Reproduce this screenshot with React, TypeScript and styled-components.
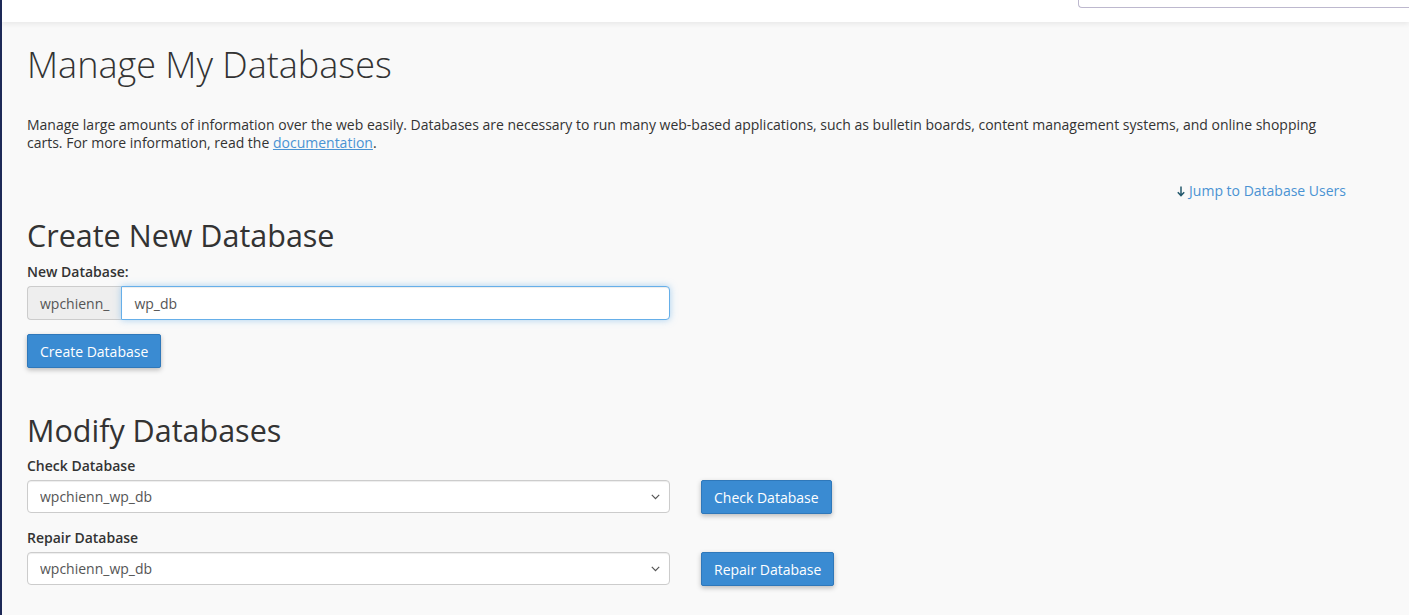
import React from 'react'
import styled, { createGlobalStyle } from 'styled-components'

const GlobalStyle = createGlobalStyle`
	html, body {
		margin: 0;
		padding: 0;
		background: #f9f9f9;
	}
	body {
		font-family: 'Open Sans', 'Liberation Sans', sans-serif;
		font-size: 14px;
		color: #333;
	}
	* {
		box-sizing: border-box;
	}
`

const Page = styled.div`
	min-height: 615px;
	border-left: 2px solid #1d2957;
	overflow: hidden;
`

const TopBar = styled.header`
	height: 22px;
	background: #fff;
	box-shadow: 0 2px 5px rgba(0, 0, 0, 0.07);
	display: flex;
	justify-content: flex-end;
	position: relative;
`

const Search = styled.div`
	width: 331px;
	height: 34px;
	margin-top: -26px;
	border: 1px solid #bdb8ce;
	border-right: none;
	border-radius: 0 0 0 4px;
	background: #fff;
	padding: 0 11px 0 18px;
	line-height: 30px;
	color: #888;
	font-size: 14px;
	white-space: nowrap;
	overflow: hidden;
`

const Paren = styled.span`
	color: #d88a3c;
`

const Main = styled.main`
	padding: 0 63px 0 25px;
`

const Title = styled.h1`
	margin: 22px 0 0;
	font-size: 36px;
	line-height: 42px;
	font-weight: 300;
	color: #333;
`

const Intro = styled.p`
	margin: 30px 0 0;
	line-height: 18px;
	max-width: 1300px;
`

const Link = styled.a`
	color: #4a93d3;
	text-decoration: underline;
`

const JumpRow = styled.div`
	margin-top: 29px;
	display: flex;
	justify-content: flex-end;
	line-height: 20px;
`

const JumpLink = styled.a`
	color: #4a93d3;
	text-decoration: none;
	display: inline-flex;
	align-items: center;
	gap: 4px;
`

const SectionTitle = styled.h2<{ gap: number }>`
	margin: ${p => p.gap}px 0 0;
	font-size: 30.5px;
	line-height: 33px;
	font-weight: 400;
	color: #333;
`

const Label = styled.label<{ gap: number }>`
	display: block;
	margin-top: ${p => p.gap}px;
	margin-bottom: 4px;
	line-height: 20px;
	font-weight: 600;
	color: #333;
`

const InputGroup = styled.div`
	display: flex;
	width: 643px;
	height: 34px;
`

const Addon = styled.span`
	display: flex;
	align-items: center;
	padding: 0 12px;
	background: #eee;
	border: 1px solid #ccc;
	border-right: none;
	border-radius: 4px 0 0 4px;
	color: #555;
`

const TextInput = styled.input`
	flex: 1;
	height: 34px;
	padding: 0 12px;
	border: 1px solid #66afe9;
	border-radius: 0 4px 4px 0;
	font: inherit;
	color: #555;
	outline: none;
	box-shadow: inset 0 1px 1px rgba(0, 0, 0, 0.075), 0 0 7px rgba(102, 175, 233, 0.55);
`

const Button = styled.button<{ gap?: number }>`
	margin-top: ${p => p.gap ?? 0}px;
	height: 34px;
	padding: 0 12px;
	background: #3a8bd2;
	border: 1px solid #2f78ba;
	border-radius: 2px;
	color: #fff;
	font: inherit;
	box-shadow: 0 2px 5px rgba(0, 0, 0, 0.25);
	cursor: pointer;
`

const SelectRow = styled.div`
	display: flex;
	align-items: flex-start;
	gap: 31px;
`

const SelectWrap = styled.div`
	position: relative;
	width: 643px;
`

const Select = styled.select`
	width: 100%;
	height: 33px;
	padding: 0 12px;
	appearance: none;
	background: #fff;
	border: 1px solid #ccc;
	border-radius: 4px;
	font: inherit;
	color: #555;
	box-shadow: inset 0 1px 1px rgba(0, 0, 0, 0.075);
`

const Chevron = styled.svg`
	position: absolute;
	right: 10px;
	top: 14px;
	pointer-events: none;
`

function ArrowDown() {
	return (
		<svg width="8" height="11" viewBox="0 0 8 11">
			<path d="M4 0.5v9M0.8 6.3L4 9.6l3.2-3.3" fill="none" stroke="#23586c" strokeWidth="1.5" />
		</svg>
	)
}

function DbSelect() {
	return (
		<SelectWrap>
			<Select defaultValue="wpchienn_wp_db">
				<option>wpchienn_wp_db</option>
			</Select>
			<Chevron width="9" height="6" viewBox="0 0 9 6">
				<path d="M0.8 0.8L4.5 4.6l3.7-3.8" fill="none" stroke="#555" strokeWidth="1.2" />
			</Chevron>
		</SelectWrap>
	)
}

export default function App() {
	return (
		<Page>
			<GlobalStyle />
			<TopBar>
				<Search>
					Search Tools <Paren>(/)</Paren>
				</Search>
			</TopBar>
			<Main>
				<Title>Manage My Databases</Title>
				<Intro>
					Manage large amounts of information over the web easily. Databases are necessary to run many
					web-based applications, such as bulletin boards, content management systems, and online shopping
					carts. For more information, read the <Link href="#">documentation</Link>.
				</Intro>
				<JumpRow>
					<JumpLink href="#">
						<ArrowDown />
						Jump to Database Users
					</JumpLink>
				</JumpRow>

				<SectionTitle gap={18}>Create New Database</SectionTitle>
				<Label gap={10}>New Database:</Label>
				<InputGroup>
					<Addon>wpchienn_</Addon>
					<TextInput defaultValue="wp_db" />
				</InputGroup>
				<Button gap={14}>Create Database</Button>

				<SectionTitle gap={46}>Modify Databases</SectionTitle>
				<Label gap={9}>Check Database</Label>
				<SelectRow>
					<DbSelect />
					<Button>Check Database</Button>
				</SelectRow>
				<Label gap={14}>Repair Database</Label>
				<SelectRow>
					<DbSelect />
					<Button>Repair Database</Button>
				</SelectRow>
			</Main>
		</Page>
	)
}
